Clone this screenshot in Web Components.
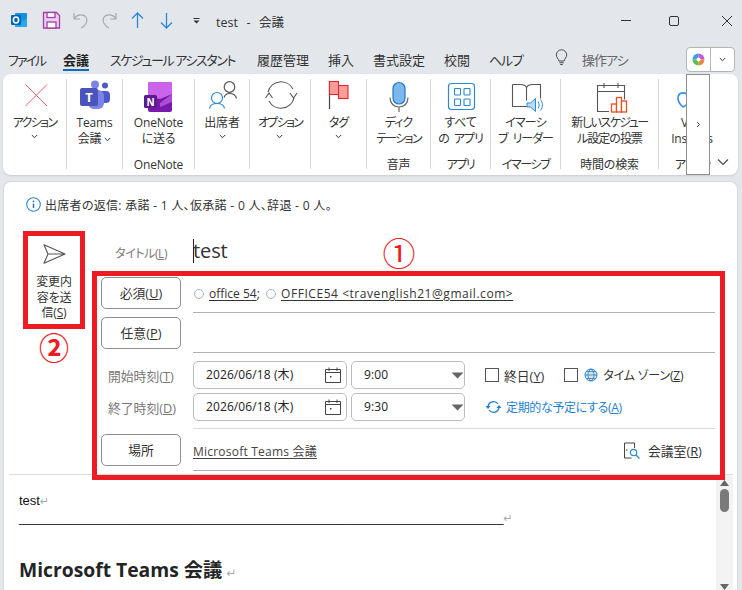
<!DOCTYPE html>
<html lang="ja">
<head>
<meta charset="utf-8">
<title>test - 会議</title>
<style>
html,body{margin:0;padding:0;background:#e3e7ec}
body{font-family:"Open Sans","Noto Sans CJK JP",sans-serif;font-size:12px;color:#333;font-feature-settings:"palt"}
</style>
</head>
<body>
<outlook-window>
  <title-bar></title-bar>
  <ribbon-tabs></ribbon-tabs>
  <meeting-ribbon></meeting-ribbon>
  <form-card>
    <meeting-form></meeting-form>
    <meeting-body></meeting-body>
  </form-card>
</outlook-window>

<script>
// base class: every element just gives its css + html
class Base extends HTMLElement{
  constructor(){
    super()
    this.attachShadow({mode:"open"})
  }
  connectedCallback(){
    const template=document.createElement("template")
    template.innerHTML=`<style>${this.css()}</style>${this.html()}`
    this.shadowRoot.appendChild(template.content.cloneNode(true))
  }
  css(){return ":host{display:block}"}
  html(){return "<slot></slot>"}
}

const chev=`<svg class="chev" width="7" height="5" viewBox="0 0 7 5"><path d="M.8 1l2.7 2.7L6.2 1" fill="none" stroke="#333" stroke-width="1"/></svg>`

class OutlookWindow extends Base{
  css(){return `:host{display:flex;flex-direction:column;width:742px;height:590px;overflow:hidden;background:#e3e7ec}`}
}
customElements.define("outlook-window",OutlookWindow)

class TitleBar extends Base{
  css(){return `
    :host{display:flex;align-items:center;height:42px;flex:none;position:relative}
    svg{flex:none;display:block}
    .name{margin-left:6px;font-size:12.5px;color:#333;white-space:pre;word-spacing:1px}
    .spacer{flex:1}
  `}
  html(){return `
    <svg width="210" height="42" viewBox="0 0 210 42">
      <rect x="15" y="13" width="12" height="14" rx="1" fill="#1490df"/>
      <path d="M15 18l6 4 6-4v9H15z" fill="#28a8ea"/>
      <rect x="11" y="15" width="10" height="10" rx="1" fill="#0364b8"/>
      <ellipse cx="16" cy="20" rx="2.6" ry="3" fill="none" stroke="#fff" stroke-width="1.6"/>
      <path d="M43.5 12.5h13l3 3v12.500h-16z" fill="#eccdef" stroke="#a13ea8" stroke-width="1.300"/>
      <rect x="47" y="12.500" width="8" height="5" fill="#fff" stroke="#a13ea8" stroke-width="1.300"/>
      <rect x="47" y="22" width="9" height="6" fill="#fff" stroke="#a13ea8" stroke-width="1.300"/>
      <path d="M74 13v6h6M74.500 18.500C77 14 84 13.500 86.500 18C88 22 85 26 81 28" fill="none" stroke="#a8a8a8" stroke-width="1.200"/>
      <path d="M116 13v6h-6M115.500 18.500C113 14 106 13.500 103.500 18C102 22 105 26 109 28" fill="none" stroke="#a8a8a8" stroke-width="1.200"/>
      <path d="M137.500 28V13M132 18.500l5.500-5.500 5.500 5.500" fill="none" stroke="#2b88d8" stroke-width="1.300"/>
      <path d="M166.500 13v15M161 22.500l5.500 5.500 5.500-5.500" fill="none" stroke="#2b88d8" stroke-width="1.300"/>
      <path d="M193.500 18.500h6" stroke="#333" stroke-width="1"/><path d="M193.500 20.500h6l-3 3z" fill="#333"/>
    </svg>
    <span class="name">test  -  会議</span>
    <span class="spacer"></span>
    <svg width="122" height="42" viewBox="620 0 122 42">
      <path d="M621 20.500h10" stroke="#333"/>
      <rect x="669.500" y="16.500" width="9" height="9" rx="1.500" fill="none" stroke="#333"/>
      <path d="M722 16l10 10M732 16l-10 10" stroke="#333"/>
    </svg>
  `}
}
customElements.define("title-bar",TitleBar)

class RibbonTabs extends Base{
  css(){return `
    :host{display:flex;align-items:flex-start;height:32px;flex:none;padding-left:8px;position:relative;font-size:13px;color:#333;box-sizing:border-box}
    span{display:block;line-height:18px;padding-top:9px;white-space:pre;flex:none}
    .on b{font-weight:700;display:inline-block;border-bottom:2px solid #0f6cbd;line-height:18px;height:18px;color:#222}
    .dim{color:#666;letter-spacing:-1px}
    svg{display:block;flex:none;margin-top:6px}
    .copilot{position:absolute;left:686px;top:5px;width:47px;height:23px;border:1px solid #b5b5b5;border-radius:4px;background:#fff;display:flex;overflow:hidden}
    .copilot i{display:flex;align-items:center;justify-content:center;width:23px;height:23px}
    .copilot i+i{border-left:1px solid #b5b5b5}
    .copilot svg{margin:0}
  `}
  html(){return `
    <span style="width:55px;letter-spacing:-2px">ファイル</span>
    <span class="on" style="width:47px"><b>会議</b></span>
    <span style="width:147px;letter-spacing:-1.400px">スケジュール アシスタント</span>
    <span style="width:71px">履歴管理</span>
    <span style="width:45px">挿入</span>
    <span style="width:71px">書式設定</span>
    <span style="width:45px">校閲</span>
    <span style="width:66px;letter-spacing:-1.200px">ヘルプ</span>
    <svg width="13" height="20" viewBox="0 0 15 20" style="margin-right:14px"><path d="M4.500 13.500C4 10.500 1.500 9.500 1.500 6.500a6 6 0 0 1 12 0c0 3-2.500 4-3 7zM5 15.500h5M6 17.500h3" fill="none" stroke="#444" stroke-width="1.100"/></svg>
    <span class="dim">操作アシ</span>
    <div class="copilot"><i>
      <svg width="13" height="13" viewBox="0 0 13 13">
        <path d="M6.500.5A6 6 0 0 1 12.500 6.500H6.500z" fill="#c65ad6"/><path d="M12.500 6.500a6 6 0 0 1-6 6V6.500z" fill="#f0863c"/>
        <path d="M6.500 12.500a6 6 0 0 1-6-6h6z" fill="#5fc04f"/><path d="M.5 6.500a6 6 0 0 1 6-6v6z" fill="#3f9be8"/>
        <circle cx="6.500" cy="6.500" r="2" fill="#fff"/>
      </svg></i><i>${chev}</i></div>
  `}
}
customElements.define("ribbon-tabs",RibbonTabs)

class RibbonGroup extends Base{
  css(){return `
    :host{display:flex;flex-direction:column;align-items:center;flex:none;box-sizing:border-box;height:90px;margin-top:5px;border-right:1px solid #d6d6d6;position:relative;font-size:12px;color:#333;width:${this.getAttribute("w")}px}
    ::slotted(svg[slot=icon]){display:block;flex:none;height:35px}
    .text{display:block;height:41px;padding-top:1px;line-height:16px;text-align:center;white-space:nowrap;letter-spacing:-.2px}
    .group{position:absolute;left:0;right:0;bottom:-4px;height:16px;line-height:16px;text-align:center;white-space:nowrap;letter-spacing:${this.getAttribute("ls")||"-.2px"}}
  `}
  html(){
    const label=this.getAttribute("label")||""
    return `<slot name="icon"></slot><div class="text"><slot></slot></div><div class="group">${label}</div>`
  }
}
customElements.define("ribbon-group",RibbonGroup)

class MeetingRibbon extends Base{
  css(){return `
    :host{display:flex;flex:none;height:101px;margin:0 4px 0 3px;background:#fff;border-radius:8px;box-shadow:0 1px 2px rgba(0,0,0,.12);position:relative;overflow:hidden}
    .chev{display:block;margin:3px auto 0}
    .chev.in{display:inline-block;margin:0 0 1px 3px}
    .k1{letter-spacing:-1px}
    .k2{letter-spacing:-1.700px}
    .scroll{position:absolute;left:683px;top:0;width:22px;height:99px;background:#fff;border:1px solid #8f8f8f;display:flex;align-items:center;justify-content:center}
    .fold{position:absolute;left:714px;top:84px;background:#fff}
    ribbon-group:last-of-type{border-right:0}
  `}
  html(){return `
    <ribbon-group w="64">
      <svg slot="icon" width="64" viewBox="3 79 64 35"><path d="M25.500 84.500l21.500 21.500M47 84.500l-21.500 21.500" stroke="#e9686b" stroke-width="1"/></svg>
      <span class="k2">アクション</span>${chev}
    </ribbon-group>
    <ribbon-group w="56">
      <svg slot="icon" width="56" viewBox="67 79 56 35">
        <circle cx="105" cy="85.500" r="3" fill="#5059c9"/><rect x="98" y="91" width="12" height="12" rx="4" fill="#5059c9"/>
        <circle cx="95" cy="84.500" r="4" fill="#7b83eb"/><rect x="88" y="90" width="16" height="19" rx="6" fill="#7b83eb"/>
        <rect x="80" y="88" width="18" height="18" rx="2" fill="#4b53bc"/>
        <text x="89" y="102" font-family="Open Sans" font-weight="700" font-size="13" fill="#fff" text-anchor="middle">T</text>
      </svg>
      Teams<br>会議${chev.replace('class="chev"','class="chev in"')}
    </ribbon-group>
    <ribbon-group w="72" label="OneNote">
      <svg slot="icon" width="72" viewBox="123 79 72 35">
        <rect x="148" y="82" width="24" height="30" rx="2" fill="#7719aa"/>
        <path d="M148 84a2 2 0 0 1 2-2h20a2 2 0 0 1 2 2v10l-12 5-12-3z" fill="#ca64ea"/>
        <path d="M160 103l12-9v8l-12 5z" fill="#ae4bd5"/>
        <rect x="144" y="95" width="13" height="13" rx="1.500" fill="#5c1a8a"/>
        <text x="150.500" y="105.500" font-family="Open Sans" font-weight="700" font-size="10" fill="#fff" text-anchor="middle">N</text>
      </svg>
      OneNote<br>に送る
    </ribbon-group>
    <ribbon-group w="55">
      <svg slot="icon" width="55" viewBox="195 79 55 35">
        <circle cx="229.500" cy="87" r="5.300" fill="none" stroke="#555" stroke-width="1.200"/>
        <path d="M224 97.500c1-3 3-4 5.500-4s6 1 7 5" fill="none" stroke="#555" stroke-width="1.200"/>
        <circle cx="217" cy="98" r="5.500" fill="#fff" stroke="#2b88d8" stroke-width="1.200"/>
        <path d="M209.500 108.500c.5-3.500 3.500-5 7.500-5s7 1.500 7.500 5" fill="none" stroke="#2b88d8" stroke-width="1.200"/>
      </svg>
      出席者${chev}
    </ribbon-group>
    <ribbon-group w="61">
      <svg slot="icon" width="61" viewBox="250 79 61 35">
        <path d="M268 92a13.500 13.500 0 0 1 25-3M294 98a13.500 13.500 0 0 1-25 3" fill="none" stroke="#555" stroke-width="1.100"/>
        <path d="M265.500 98l3.500-5 3.500 5M290 93l3.500 5 3.500-5" fill="none" stroke="#555" stroke-width="1.100"/>
      </svg>
      <span class="k2">オプション</span>${chev}
    </ribbon-group>
    <ribbon-group w="56">
      <svg slot="icon" width="56" viewBox="311 79 56 35">
        <path d="M329.500 81v28" stroke="#444" stroke-width="1.200"/>
        <rect x="329.500" y="81.500" width="9" height="13" fill="#ff9c9c" stroke="#de2a2e" stroke-width="1.100"/>
        <rect x="338.500" y="85.500" width="9.500" height="13" fill="#ff9c9c" stroke="#de2a2e" stroke-width="1.100"/>
      </svg>
      <span class="k1">タグ</span>${chev}
    </ribbon-group>
    <ribbon-group w="64" label="音声">
      <svg slot="icon" width="64" viewBox="367 79 64 35">
        <rect x="393" y="82.500" width="12" height="21.500" rx="6" fill="#7db8ec" stroke="#1f7ac4" stroke-width="1.200"/>
        <path d="M390 97.500c0 6 4 9.500 9 9.500s9-3.500 9-9.500M399 107v5" fill="none" stroke="#666" stroke-width="1.200"/>
      </svg>
      <span class="k1">ディク</span><br><span class="k2">テーション</span>
    </ribbon-group>
    <ribbon-group w="60" label="アプリ" ls="-1.500px">
      <svg slot="icon" width="60" viewBox="431 79 60 35">
        <rect x="448.500" y="83.500" width="26" height="26" rx="3" fill="none" stroke="#2b88d8" stroke-width="1.200"/>
        <g fill="none" stroke="#2b88d8" stroke-width="1.100">
          <rect x="454.500" y="88.500" width="6" height="6.500" rx=".8"/><rect x="464" y="88.500" width="6" height="6.500" rx=".8"/>
          <rect x="454.500" y="99" width="6" height="6.500" rx=".8"/><rect x="464" y="99" width="6" height="6.500" rx=".8"/>
        </g>
      </svg>
      すべて<br><span class="k1" style="word-spacing:3px">の アプリ</span>
    </ribbon-group>
    <ribbon-group w="70" label="イマーシブ" ls="-1.400px">
      <svg slot="icon" width="70" viewBox="491 79 70 35">
        <path d="M512.500 84.500h8c3 0 5 1 6 3 1-2 3-3 6-3h8v14M526.500 87.500v13M512.500 84.500v22h16" fill="none" stroke="#555" stroke-width="1.100"/>
        <path d="M527 103h3.500l5-4.500v13l-5-4.500H527z" fill="#bcdcf5" stroke="#2b88d8" stroke-width="1"/>
        <path d="M538 101.500c1.500 2 1.500 5 0 7M540.500 99.500c2.500 3 2.500 8 0 11" fill="none" stroke="#2b88d8" stroke-width="1"/>
      </svg>
      <span style="letter-spacing:-.8px">イマーシ</span><br><span class="k1" style="word-spacing:3px">ブ リーダー</span>
    </ribbon-group>
    <ribbon-group w="98" label="時間の検索">
      <svg slot="icon" width="98" viewBox="561 79 98 35">
        <path d="M609 111.500h-11.500v-26h27v14M597.500 91.500h27M604 83v5M618 83v5" fill="none" stroke="#555" stroke-width="1.100"/>
        <g fill="#fff" stroke="#e8501f" stroke-width="1.300"><rect x="611.500" y="104" width="5" height="8"/><rect x="616.500" y="97.500" width="5" height="14.500"/><rect x="621.500" y="101" width="5" height="11"/></g>
      </svg>
      <span style="letter-spacing:-1.500px">新しいスケジュー</span><br><span class="k1">ル設定の投票</span>
    </ribbon-group>
    <ribbon-group w="66" label="アドイン" ls="-2px">
      <svg slot="icon" width="66" viewBox="659 79 66 35">
        <path d="M692 100c-5 5-9 7-9 7s-5-4-5-9 6-7 10-3" fill="none" stroke="#3b8ee0" stroke-width="1.600"/>
      </svg>
      Viva<br>Insights
    </ribbon-group>
    <div class="scroll"><svg width="5" height="7" viewBox="0 0 5 7"><path d="M1 1l2.500 2.500L1 6" fill="none" stroke="#444"/></svg></div>
    <svg class="fold" width="12" height="8" viewBox="0 0 12 8"><path d="M1 1.500l5 5 5-5" fill="none" stroke="#444" stroke-width="1.100"/></svg>
  `}
}
customElements.define("meeting-ribbon",MeetingRibbon)

class FormCard extends Base{
  css(){return `
    :host{display:flex;flex-direction:column;flex:1;min-height:0;margin:6px 4px 0 3px;background:#fff;border:1px solid #d9d9d9;border-bottom:0;border-radius:8px 8px 0 0;box-sizing:border-box;overflow:hidden}
  `}
}
customElements.define("form-card",FormCard)

class FieldButton extends Base{
  css(){return `
    :host{display:flex;align-items:center;justify-content:center;flex:none;box-sizing:border-box;width:80px;height:32px;border:1px solid #8f8f8f;border-radius:5px;background:#fff;font-size:12.800px;color:#333;padding-bottom:1px}
  `}
}
customElements.define("field-button",FieldButton)

class DateField extends Base{
  css(){return `
    :host{display:flex;align-items:center;flex:none;box-sizing:border-box;height:28px;border:1px solid #bdbdbd;border-radius:5px;background:#fff;font-size:12px;color:#222;padding:0 5px 2px 12px;justify-content:space-between;width:${this.getAttribute("w")}px;letter-spacing:.1px}
    svg{display:block;flex:none;margin-top:2px}
  `}
  html(){
    const icon=this.getAttribute("kind")=="time"
      ? `<svg width="13" height="7" viewBox="0 0 13 7" style="margin-right:-5px"><path d="M.5 .5h12L6.500 6.500z" fill="#666"/></svg>`
      : `<svg width="16" height="16" viewBox="0 0 16 16"><path d="M.5 2.500h15v13H.5zM.5 5.500h15M4 .5v3.500M12 .5v3.500" fill="none" stroke="#444"/><rect x="5" y="9" width="1.500" height="1.500" fill="#444"/></svg>`
    return `<span><slot></slot></span>${icon}`
  }
}
customElements.define("date-field",DateField)

class MeetingForm extends Base{
  css(){return `
    :host{display:block;flex:none;height:295px;margin-bottom:-3px;position:relative;z-index:1;font-size:12px;color:#333}
    .info{display:flex;align-items:center;height:49px;padding:0 0 4px 22px;box-sizing:border-box;gap:4px;font-size:12px;letter-spacing:.3px;color:#333}
    .info svg{display:block;flex:none}
    .main{display:flex;align-items:flex-start}
    .left{flex:none;margin-left:19px;width:62px}
    .send{box-sizing:border-box;height:98px;border:5px solid #ed1c24;padding-top:8px;text-align:center;line-height:15.500px;font-size:12px;letter-spacing:-.2px}
    .send svg{display:block;margin:0 auto 10px}
    .mark{color:#ed1c24;font-family:"Noto Sans CJK JP",sans-serif;font-weight:700;font-size:30px;line-height:30px;margin-top:2px;text-align:center}
    .right{flex:none;margin-left:7px;width:633px}
    .title{display:flex;align-items:center;height:40px}
    .title label{width:101px;box-sizing:border-box;padding-left:23px;padding-top:3px;color:#7a7a7a;font-size:12px;letter-spacing:-.4px}
    .title .val{font-size:20px;color:#333;line-height:24px;border-left:1px solid #222;height:24px;margin-top:-1px;width:190px;font-family:"Open Sans",sans-serif;letter-spacing:-.1px;text-indent:-1px}
    .title .mark{font-weight:400;font-size:33px;line-height:36px;width:30px;margin-top:2px;margin-left:0;flex:none;display:flex;justify-content:center}
    .box{box-sizing:border-box;height:209px;border:5px solid #ed1c24;padding:1px 0 0 4px}
    .row{display:flex;margin-bottom:4px}
    .row field-button{margin-right:12px}
    .who{width:522px;height:36px;box-sizing:border-box;border-bottom:1px solid #b0b0b0;display:flex;align-items:center;padding:0 0 2px 1px;color:#333;white-space:pre}
    .who u{text-underline-offset:2px}
    .who .far{letter-spacing:.55px}
    .dot{display:inline-block;width:8px;height:8px;border:1px solid #a6b4c4;border-radius:50%;margin-right:5px;background:#fff}
    .time{display:flex;align-items:center;height:28px;margin-bottom:4px}
    .time .lb{width:92px;padding-left:7px;box-sizing:border-box;color:#777;font-size:12.800px;flex:none;white-space:nowrap}
    .time date-field+date-field{margin-left:4px}
    .chk{display:inline-block;width:12px;height:12px;border:1px solid #555;background:#fff;flex:none}
    .rest{margin-left:20px;display:flex;align-items:center;white-space:pre;color:#333}
    .rest svg{display:block;flex:none}
    .rec{color:#1f7fcc;letter-spacing:-.35px}
    .sep{margin:7px 0 0 92px;width:522px;border-top:1px solid #dcdcdc;height:5px}
    .place{display:flex;align-items:flex-start}
    .place field-button{margin-right:12px}
    .loc{width:407px;height:37px;box-sizing:border-box;border-bottom:1px solid #b0b0b0;padding-top:9px;line-height:18px;letter-spacing:.22px}
    .loc u{color:#444;text-underline-offset:2px}
    .room{display:flex;align-items:center;margin-left:24px;gap:8px;height:32px;font-size:12.800px}
    .room svg{display:block}
  `}
  html(){return `
    <div class="info">
      <svg width="15" height="15" viewBox="0 0 15 15"><circle cx="7.500" cy="7.500" r="6.800" fill="none" stroke="#2b88d8" stroke-width="1.100"/><path d="M7.500 6.500v4.500" stroke="#2b6da8" stroke-width="1.400"/><circle cx="7.500" cy="4.300" r=".9" fill="#2b6da8"/></svg>
      <span>出席者の返信: 承諾 - 1 人、仮承諾 - 0 人、辞退 - 0 人。</span>
    </div>
    <div class="main">
      <div class="left">
        <div class="send">
          <svg width="23" height="20" viewBox="0 0 23 20"><path d="M1 .8L22 10 1 19.200 5 10zM5 10h17" fill="none" stroke="#555" stroke-width="1.100" stroke-linejoin="round"/></svg>
          <div>変更内<br>容を送<br>信(<u>S</u>)</div>
        </div>
        <div class="mark">②</div>
      </div>
      <div class="right">
        <div class="title">
          <label>タイトル(<u>L</u>)</label>
          <div class="val">test</div>
          <div class="mark">①</div>
        </div>
        <div class="box">
          <div class="row">
            <field-button>必須(<u>U</u>)</field-button>
            <div class="who"><i class="dot"></i><u>office 54</u>;  <i class="dot"></i><u class="far">OFFICE54 &lt;travenglish21@gmail.com&gt;</u></div>
          </div>
          <div class="row">
            <field-button>任意(<u>P</u>)</field-button>
            <div class="who"></div>
          </div>
          <div class="time" style="margin-top:8px">
            <span class="lb">開始時刻(<u>T</u>)</span>
            <date-field w="154">2026/06/18 (木)</date-field>
            <date-field w="114" kind="time">9:00</date-field>
            <div class="rest">
              <i class="chk"></i><span style="margin:0 20px 0 5px;font-size:12.800px">終日(<u>Y</u>)</span><i class="chk"></i>
              <svg width="14" height="14" viewBox="0 0 14 14" style="margin:0 5px 0 6px"><circle cx="7" cy="7" r="6" fill="#cfe6f8" stroke="#2b88d8"/><path d="M1 7h12M7 1c-4 3-4 9 0 12M7 1c4 3 4 9 0 12M2.500 3.500h9M2.500 10.500h9" fill="none" stroke="#2b6da8" stroke-width=".7"/></svg>
              <span style="letter-spacing:-.2px">タイム ゾーン(<u>Z</u>)</span>
            </div>
          </div>
          <div class="time" style="margin-bottom:0">
            <span class="lb">終了時刻(<u>D</u>)</span>
            <date-field w="154">2026/06/18 (木)</date-field>
            <date-field w="114" kind="time">9:30</date-field>
            <div class="rest rec">
              <svg width="17" height="14" viewBox="0 0 17 14" style="margin-right:4px"><path d="M3 7a5.500 5.500 0 0 1 10-3M14 7a5.500 5.500 0 0 1-10 3" fill="none" stroke="#1f7fcc" stroke-width="1.300"/><path d="M.5 6h5L3 9zM11.500 8h5L14 5z" fill="#1f7fcc"/></svg>
              <span>定期的な予定にする(<u>A</u>)</span>
            </div>
          </div>
          <div class="sep"></div>
          <div class="place">
            <field-button>場所</field-button>
            <div class="loc"><u>Microsoft Teams 会議</u></div>
            <div class="room">
              <svg width="16" height="17" viewBox="0 0 16 17"><path d="M10.500 1H.5v15h7M10.500 1v5" fill="none" stroke="#444"/><circle cx="2.800" cy="8" r=".8" fill="#444"/><circle cx="9.500" cy="10.500" r="3.200" fill="none" stroke="#2b88d8" stroke-width="1.200"/><path d="M12 13l3.500 3.500" stroke="#2b88d8" stroke-width="1.300"/></svg>
              <span>会議室(<u>R</u>)</span>
            </div>
          </div>
        </div>
      </div>
    </div>
  `}
}
customElements.define("meeting-form",MeetingForm)

class MeetingBody extends Base{
  css(){return `
    :host{display:flex;flex:1;min-height:0;margin:0 4px 0 5px;border-top:1px solid #dcdcdc;overflow:hidden}
    .doc{flex:1;padding:14px 0 0 10px;font-family:"Liberation Sans",sans-serif;font-size:13px;color:#111;min-width:0;white-space:nowrap}
    .doc p{margin:0;line-height:18px;height:18px}
    .ret{color:#aaa;font-family:"DejaVu Sans",sans-serif;font-size:11px}
    .doc .line{line-height:16px}
    h2{margin:28px 0 0;font-family:"Open Sans","Noto Sans CJK JP",sans-serif;font-size:19.300px;font-weight:700;line-height:28px;color:#242424;font-feature-settings:"palt"}
    .bar{flex:none;width:17px;background:#f3f3f3;display:flex;flex-direction:column;align-items:center;border-radius:4px 4px 0 0}
    .bar svg{display:block;flex:none;margin-top:5px}
    .thumb{width:9px;height:23px;background:#7a7a7a;border-radius:5px;margin-top:3px}
    .bar svg+.thumb+svg{margin-top:auto}
  `}
  html(){return `
    <div class="doc">
      <p style="padding-top:3px">test<span class="ret">↵</span></p>
      <p class="line">___________________________________________________________________<span class="ret">↵</span></p>
      <h2>Microsoft Teams 会議<span class="ret" style="font-weight:400;font-size:12px;margin-left:4px">↵</span></h2>
    </div>
    <div class="bar">
      <svg width="9" height="6" viewBox="0 0 9 6"><path d="M4.500 0L9 6H0z" fill="#666"/></svg>
      <div class="thumb"></div>
      <svg width="9" height="6" viewBox="0 0 9 6"><path d="M0 0h9L4.500 6z" fill="#666"/></svg>
    </div>
  `}
}
customElements.define("meeting-body",MeetingBody)
</script>
</body>
</html>
